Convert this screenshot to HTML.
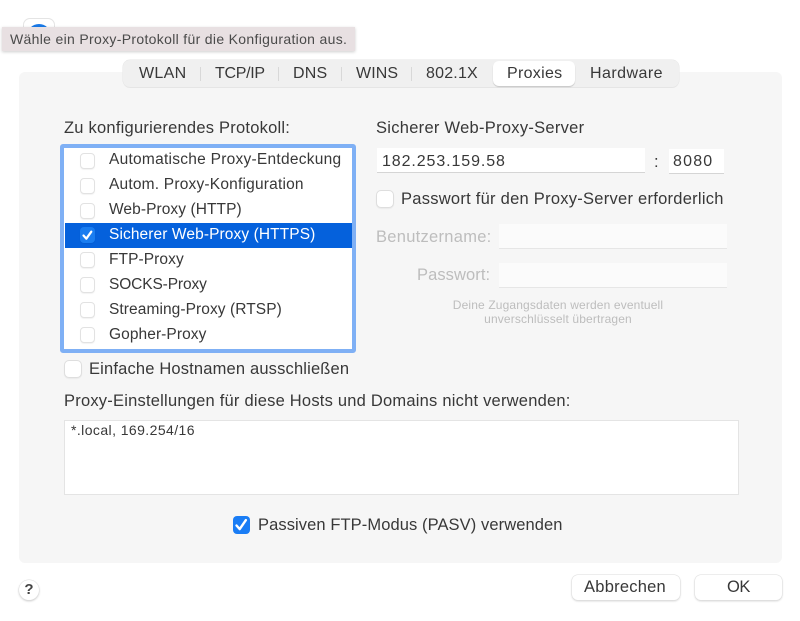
<!DOCTYPE html>
<html><head><meta charset="utf-8">
<style>
html,body{margin:0;padding:0;background:#fff;width:800px;height:621px;overflow:hidden}
body{position:relative;font-family:"Liberation Sans",sans-serif;color:#333;-webkit-font-smoothing:antialiased;filter:blur(.3px)}
div{position:absolute;box-sizing:border-box}
.t{white-space:nowrap;font-size:16.5px;line-height:20px;letter-spacing:.23px;color:#383838}
.c{width:15px;height:16px;background:#fff;border:1px solid #e2e2e2;border-radius:4px;box-shadow:0 1px 1px rgba(0,0,0,.05)}
.b{width:18px;height:18px;background:#fff;border:1px solid #dedede;border-radius:5px;box-shadow:0 1px 1px rgba(0,0,0,.05)}
.r{font-size:15.5px;left:109px}
.sep{width:1px;height:14px;top:67px;background:#d8d8d8}
.tab{top:64px;text-align:center;font-size:16px}
.f{background:#fff;box-shadow:0 1px 0 #d5d5d5}
.d{background:#fbfbfb;box-shadow:0 1px 0 #e6e6e6}
.btn{background:#fff;border-radius:6px;box-shadow:0 0 0 .5px #ddd,0 1px 2px rgba(0,0,0,.2);top:575px;height:25px}
svg{position:absolute;left:0;top:0}
</style></head><body>

<div style="left:23px;top:18px;width:32px;height:32px;background:#fff;border:1px solid #e4e4e4;border-radius:7px"></div>
<div style="left:27px;top:24px;width:24px;height:24px;background:#1a7ae8;border-radius:50%"></div>

<div style="left:19px;top:72px;width:763px;height:491px;background:#f6f6f6;border-radius:6px"></div>

<div style="left:123px;top:60px;width:556px;height:27px;background:#f0f0f0;border-radius:7px;box-shadow:0 0 0 .5px #e6e6e6,0 1px 0 #e4e4e4"></div>
<div style="left:493px;top:61px;width:82px;height:25px;background:#fff;border-radius:6px;box-shadow:0 1px 1px rgba(0,0,0,.18)"></div>
<div class="t tab" style="left:139px;letter-spacing:.3px">WLAN</div>
<div class="sep" style="left:200px"></div>
<div class="t tab" style="left:215px;letter-spacing:-.3px">TCP/IP</div>
<div class="sep" style="left:278px"></div>
<div class="t tab" style="left:293px;letter-spacing:.2px">DNS</div>
<div class="sep" style="left:341px"></div>
<div class="t tab" style="left:356px;letter-spacing:.1px">WINS</div>
<div class="sep" style="left:411px"></div>
<div class="t tab" style="left:426px;letter-spacing:.2px">802.1X</div>
<div class="t tab" style="left:507px;letter-spacing:.3px">Proxies</div>
<div class="t tab" style="left:590px;letter-spacing:.45px">Hardware</div>

<div style="left:2px;top:27px;width:353px;height:24px;background:#e8e0e2;box-shadow:0 1px 3px rgba(0,0,0,.2)"></div>
<div class="t" style="left:10px;top:29px;font-size:14px;letter-spacing:.32px;color:#4a4a4a">Wähle ein Proxy-Protokoll für die Konfiguration aus.</div>

<div class="t" style="left:64px;top:118px;letter-spacing:.23px">Zu konfigurierendes Protokoll:</div>

<div style="left:60px;top:144px;width:296px;height:209px;background:#fff;border:4px solid #7fb0f5;border-radius:3px"></div>
<div style="left:65px;top:223px;width:287px;height:25px;background:#0561dc"></div>

<div class="c" style="left:80px;top:153px"></div>
<div class="c" style="left:80px;top:178px"></div>
<div class="c" style="left:80px;top:203px"></div>
<div class="c" style="left:80px;top:227px;background:#1a7df0;border-color:#1a7df0"></div>
<div class="c" style="left:80px;top:252px"></div>
<div class="c" style="left:80px;top:277px"></div>
<div class="c" style="left:80px;top:302px"></div>
<div class="c" style="left:80px;top:327px"></div>

<div class="t r" style="top:150px;letter-spacing:.26px">Automatische Proxy-Entdeckung</div>
<div class="t r" style="top:175px;letter-spacing:.2px">Autom. Proxy-Konfiguration</div>
<div class="t r" style="top:200px;letter-spacing:.08px">Web-Proxy (HTTP)</div>
<div class="t r" style="top:225px;color:#fff;letter-spacing:.1px">Sicherer Web-Proxy (HTTPS)</div>
<div class="t r" style="top:250px;letter-spacing:.08px">FTP-Proxy</div>
<div class="t r" style="top:275px;letter-spacing:-.12px">SOCKS-Proxy</div>
<div class="t r" style="top:300px;letter-spacing:.08px">Streaming-Proxy (RTSP)</div>
<div class="t r" style="top:325px;letter-spacing:.08px">Gopher-Proxy</div>

<div class="b" style="left:64px;top:360px"></div>
<div class="t" style="left:89px;top:359px;letter-spacing:.17px">Einfache Hostnamen ausschließen</div>

<div class="t" style="left:376px;top:118px;letter-spacing:.28px">Sicherer Web-Proxy-Server</div>
<div class="f" style="left:377px;top:148px;width:268px;height:24px"></div>
<div class="t" style="left:382px;top:152px;font-size:16px;letter-spacing:.9px">182.253.159.58</div>
<div class="t" style="left:654px;top:152px">:</div>
<div class="f" style="left:669px;top:149px;width:55px;height:24px"></div>
<div class="t" style="left:673px;top:152px;font-size:16px;letter-spacing:1.2px">8080</div>

<div class="b" style="left:376px;top:190px"></div>
<div class="t" style="left:401px;top:189px;letter-spacing:.26px">Passwort für den Proxy-Server erforderlich</div>

<div class="t" style="left:376px;top:227px;color:#bdbdbd;letter-spacing:.28px">Benutzername:</div>
<div class="d" style="left:499px;top:224px;width:228px;height:24px"></div>
<div class="t" style="left:417px;top:265px;color:#bdbdbd;letter-spacing:.08px">Passwort:</div>
<div class="d" style="left:499px;top:263px;width:228px;height:24px"></div>

<div class="t" style="left:408px;width:300px;top:298px;text-align:center;font-size:12px;line-height:14px;letter-spacing:.14px;color:#bdbdbd">Deine Zugangsdaten werden eventuell<br>unverschlüsselt übertragen</div>

<div class="t" style="left:64px;top:391px;letter-spacing:.22px">Proxy-Einstellungen für diese Hosts und Domains nicht verwenden:</div>
<div style="left:64px;top:420px;width:675px;height:75px;background:#fff;border:1px solid #e4e4e4"></div>
<div class="t" style="left:71px;top:420px;font-size:14px;letter-spacing:.42px">*.local, 169.254/16</div>

<div style="left:233px;top:516px;width:17px;height:18px;background:#1a7df5;border-radius:4px"></div>
<div class="t" style="left:258px;top:515px;letter-spacing:.09px">Passiven FTP-Modus (PASV) verwenden</div>

<svg width="800" height="621" viewBox="0 0 800 621" fill="none">
<path d="M83.5 235.5l2.8 3.2 5-7" stroke="#fff" stroke-width="2.2" stroke-linecap="round" stroke-linejoin="round"/>
<path d="M236.5 525.5l3.2 3.6 6.2-9" stroke="#fff" stroke-width="2.4" stroke-linecap="round" stroke-linejoin="round"/>
</svg>

<div style="left:19px;top:580px;width:20px;height:20px;background:#fff;border-radius:50%;box-shadow:0 0 0 .5px #ddd,0 1px 2px rgba(0,0,0,.25)"></div>
<div class="t" style="left:19px;top:580px;width:20px;text-align:center;font-size:15px;font-weight:bold;letter-spacing:0;color:#444">?</div>

<div class="btn" style="left:572px;width:108px"></div>
<div class="t" style="left:571px;width:108px;top:577px;text-align:center">Abbrechen</div>
<div class="btn" style="left:695px;width:87px"></div>
<div class="t" style="left:695px;width:87px;top:577px;text-align:center;letter-spacing:-.4px">OK</div>

</body></html>
